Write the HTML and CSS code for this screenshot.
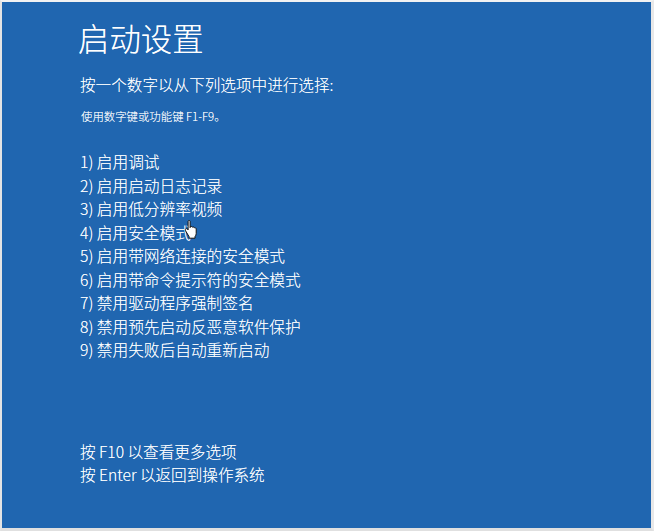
FILE: index.html
```html
<!DOCTYPE html>
<html lang="zh-CN">
<head>
<meta charset="utf-8">
<title>启动设置</title>
<link rel="stylesheet" href="styles.css">
</head>
<body>
<main class="screen">
  <h1 class="title">启动设置</h1>
  <p class="prompt">按一个数字以从下列选项中进行选择:</p>
  <p class="hint">使用数字键或功能键 F1-F9。</p>
  <ol class="options">
    <li>1) 启用调试</li>
    <li>2) 启用启动日志记录</li>
    <li>3) 启用低分辨率视频</li>
    <li>4) 启用安全模式</li>
    <li>5) 启用带网络连接的安全模式</li>
    <li>6) 启用带命令提示符的安全模式</li>
    <li>7) 禁用驱动程序强制签名</li>
    <li>8) 禁用预先启动反恶意软件保护</li>
    <li>9) 禁用失败后自动重新启动</li>
  </ol>
  <ul class="footer">
    <li>按 F10 以查看更多选项</li>
    <li>按 Enter 以返回到操作系统</li>
  </ul>
  <svg class="cursor" viewBox="0 0 14 20" width="15" height="20" aria-hidden="true">
    <path d="M3.6 1.4c0-1.2 2-1.2 2 0v6.2l.3-.9c.9-.5 1.7-.2 2 .5.8-.5 1.7-.2 2 .6.9-.3 1.8.3 1.8 1.3v4.4c0 1.3-.5 2.2-1.2 3.1v1.6H4.6v-1.5L1.2 11c-.7-1-.5-1.9.2-2.2.6-.3 1.3 0 1.8.6l.4.6z" fill="#fff" stroke="#111" stroke-width="1"/>
  </svg>
</main>
</body>
</html>
```
FILE: styles.css
```css
html, body {
  margin: 0;
  padding: 0;
  background: #ffffff;
}
body {
  width: 654px;
  height: 531px;
  overflow: hidden;
}
.screen {
  position: relative;
  box-sizing: border-box;
  width: 654px;
  height: 531px;
  margin: 0;
  padding: 0 0 0 78px;
  border-top: 2px solid #f2f2f2;
  border-left: 2px solid #e4e4e4;
  border-right: 3px solid #e8e8e8;
  border-bottom: 3px solid #e0e0e0;
  background: #2066b0;
  color: #fafcfe;
  font-family: "Noto Sans CJK SC", "Noto Sans", sans-serif;
  font-weight: 300;
  text-shadow: 0 0 0.6px rgba(255, 255, 255, 0.7);
}
.title {
  margin: 13px 0 0 -2px;
  font-size: 31.4px;
  line-height: 46px;
  font-weight: 300;
  color: #ffffff;
}
.prompt {
  margin: 11px 0 0;
  font-size: 15.6px;
  line-height: 24px;
}
.hint {
  margin: 12px 0 0 1px;
  font-size: 11.4px;
  line-height: 16px;
}
.options,
.footer {
  margin: 0;
  padding: 0;
  list-style: none;
  font-size: 15.7px;
  line-height: 23.5px;
}
.options {
  margin-top: 26px;
}
.footer {
  margin-top: 78px;
  font-size: 15.6px;
}
.cursor {
  position: absolute;
  left: 182px;
  top: 218px;
}
```
